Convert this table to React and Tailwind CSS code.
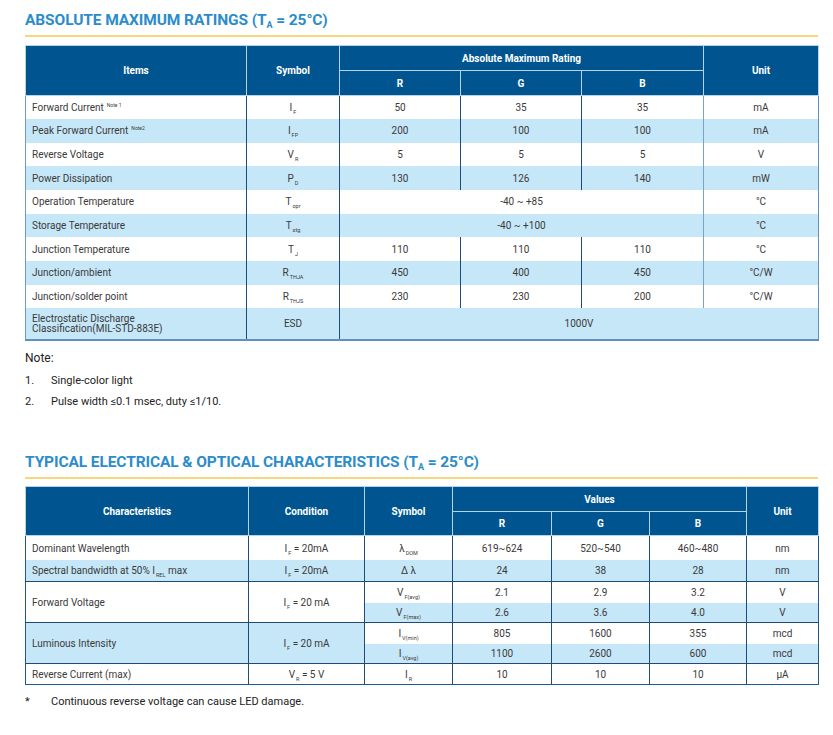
const headCell = "bg-[#005591] text-white font-bold text-[10px] text-center border border-[#b7d3e8]";
const td = "text-[10px] text-[#3a3a3a] text-center";
const dark = "border-l border-[#1e4b78]";
const light = "border-l border-[#7aa4c6]";

function Sym({ b, s }) {
  return (
    <span>
      {b}
      {s && <sub className="text-[5.5px] bottom-[-3px] ml-[1px]">{s}</sub>}
    </span>
  );
}

function Title({ children }) {
  return (
    <div className="pb-[5px] border-b-2 border-[#f6d77d]">
      <h2 className="text-[15.5px] font-bold text-[#2b8ccc] leading-[20px] tracking-[-0.1px]">{children}</h2>
    </div>
  );
}

const ratings = [
  { item: "Forward Current", note: "Note 1", sym: ["I", "F"], v: ["50", "35", "35"], unit: "mA" },
  { item: "Peak Forward Current", note: "Note2", sym: ["I", "FP"], v: ["200", "100", "100"], unit: "mA" },
  { item: "Reverse Voltage", sym: ["V", "R"], v: ["5", "5", "5"], unit: "V" },
  { item: "Power Dissipation", sym: ["P", "D"], v: ["130", "126", "140"], unit: "mW" },
  { item: "Operation Temperature", sym: ["T", "opr"], span: "-40 ~ +85", unit: "°C" },
  { item: "Storage Temperature", sym: ["T", "stg"], span: "-40 ~ +100", unit: "°C" },
  { item: "Junction Temperature", sym: ["T", "J"], v: ["110", "110", "110"], unit: "°C" },
  { item: "Junction/ambient", sym: ["R", "THJA"], v: ["450", "400", "450"], unit: "°C/W" },
  { item: "Junction/solder point", sym: ["R", "THJS"], v: ["230", "230", "200"], unit: "°C/W" },
];

function RatingsTable() {
  return (
    <table className="w-[793px] border-collapse table-fixed border-b-2 border-b-[#5d91bf]">
      <colgroup>
        <col className="w-[221px]" />
        <col className="w-[93px]" />
        <col className="w-[121px]" />
        <col className="w-[121px]" />
        <col className="w-[122px]" />
        <col className="w-[115px]" />
      </colgroup>
      <thead>
        <tr className="h-[25px]">
          <th rowSpan={2} className={headCell}>Items</th>
          <th rowSpan={2} className={headCell}>Symbol</th>
          <th colSpan={3} className={headCell}>Absolute Maximum Rating</th>
          <th rowSpan={2} className={headCell}>Unit</th>
        </tr>
        <tr className="h-[25px]">
          <th className={headCell}>R</th>
          <th className={headCell}>G</th>
          <th className={headCell}>B</th>
        </tr>
      </thead>
      <tbody>
        {ratings.map((r, i) => (
          <tr key={r.item} className={`h-[23.66px] ${i % 2 ? "bg-[#c6e7f8]" : "bg-white"}`}>
            <td className={`${td} text-left pl-[6px] border-l border-[#6f9cc2]`}>
              {r.item}
              {r.note && <sup className="text-[5px] ml-[3px] top-[-4px]">{r.note}</sup>}
            </td>
            <td className={`${td} ${dark}`}><Sym b={r.sym[0]} s={r.sym[1]} /></td>
            {r.span ? (
              <td colSpan={3} className={`${td} ${dark}`}>{r.span}</td>
            ) : (
              r.v.map((v, j) => (
                <td key={j} className={`${td} ${dark}`}>{v}</td>
              ))
            )}
            <td className={`${td} ${light} border-r border-r-[#5d91bf]`}>{r.unit}</td>
          </tr>
        ))}
        <tr className="h-[32px] bg-[#c6e7f8]">
          <td className={`${td} text-left pl-[6px] leading-[10px] border-l border-[#6f9cc2]`}>
            Electrostatic Discharge
            <br />
            Classification(MIL-STD-883E)
          </td>
          <td className={`${td} ${dark}`}>ESD</td>
          <td colSpan={4} className={`${td} ${dark} border-r border-r-[#5d91bf]`}>1000V</td>
        </tr>
      </tbody>
    </table>
  );
}

const b2 = "border-l border-[#1e4b78]";

function CharTable() {
  const blue = "bg-[#c6e7f8]";
  const top = "border-t border-t-[#1e4b78]";
  return (
    <table className="w-[793px] border-collapse table-fixed border border-[#1e5a8e]">
      <colgroup>
        <col className="w-[223px]" />
        <col className="w-[116px]" />
        <col className="w-[88px]" />
        <col className="w-[99px]" />
        <col className="w-[98px]" />
        <col className="w-[97px]" />
        <col className="w-[72px]" />
      </colgroup>
      <thead>
        <tr className="h-[25px]">
          <th rowSpan={2} className={headCell}>Characteristics</th>
          <th rowSpan={2} className={headCell}>Condition</th>
          <th rowSpan={2} className={headCell}>Symbol</th>
          <th colSpan={3} className={headCell}>Values</th>
          <th rowSpan={2} className={headCell}>Unit</th>
        </tr>
        <tr className="h-[24px]">
          <th className={headCell}>R</th>
          <th className={headCell}>G</th>
          <th className={headCell}>B</th>
        </tr>
      </thead>
      <tbody>
        <tr className="h-[24px] bg-white">
          <td className={`${td} text-left pl-[6px]`}>Dominant Wavelength</td>
          <td className={`${td} ${b2}`}><Sym b="I" s="F" /> = 20mA</td>
          <td className={`${td} ${b2}`}><Sym b="λ" s="DOM" /></td>
          <td className={`${td} ${b2}`}>619~624</td>
          <td className={`${td} ${b2}`}>520~540</td>
          <td className={`${td} ${b2}`}>460~480</td>
          <td className={`${td} ${b2}`}>nm</td>
        </tr>
        <tr className={`h-[22px] ${blue}`}>
          <td className={`${td} text-left pl-[6px]`}>
            Spectral bandwidth at 50% <Sym b="I" s="REL" /> max
          </td>
          <td className={`${td} ${b2}`}><Sym b="I" s="F" /> = 20mA</td>
          <td className={`${td} ${b2}`}>Δ λ</td>
          <td className={`${td} ${b2}`}>24</td>
          <td className={`${td} ${b2}`}>38</td>
          <td className={`${td} ${b2}`}>28</td>
          <td className={`${td} ${b2}`}>nm</td>
        </tr>
        <tr className={`h-[21px] bg-white ${top}`}>
          <td rowSpan={2} className={`${td} text-left pl-[6px]`}>Forward Voltage</td>
          <td rowSpan={2} className={`${td} ${b2}`}><Sym b="I" s="F" /> = 20 mA</td>
          <td className={`${td} ${b2}`}><Sym b="V" s="F(avg)" /></td>
          <td className={`${td} ${b2}`}>2.1</td>
          <td className={`${td} ${b2}`}>2.9</td>
          <td className={`${td} ${b2}`}>3.2</td>
          <td className={`${td} ${b2}`}>V</td>
        </tr>
        <tr className={`h-[20px] ${blue}`}>
          <td className={`${td} ${b2}`}><Sym b="V" s="F(max)" /></td>
          <td className={`${td} ${b2}`}>2.6</td>
          <td className={`${td} ${b2}`}>3.6</td>
          <td className={`${td} ${b2}`}>4.0</td>
          <td className={`${td} ${b2}`}>V</td>
        </tr>
        <tr className={`h-[21px] bg-white ${top}`}>
          <td rowSpan={2} className={`${td} text-left pl-[6px] ${blue}`}>Luminous Intensity</td>
          <td rowSpan={2} className={`${td} ${b2} ${blue}`}><Sym b="I" s="F" /> = 20 mA</td>
          <td className={`${td} ${b2}`}><Sym b="I" s="V(min)" /></td>
          <td className={`${td} ${b2}`}>805</td>
          <td className={`${td} ${b2}`}>1600</td>
          <td className={`${td} ${b2}`}>355</td>
          <td className={`${td} ${b2}`}>mcd</td>
        </tr>
        <tr className={`h-[20px] ${blue}`}>
          <td className={`${td} ${b2}`}><Sym b="I" s="V(avg)" /></td>
          <td className={`${td} ${b2}`}>1100</td>
          <td className={`${td} ${b2}`}>2600</td>
          <td className={`${td} ${b2}`}>600</td>
          <td className={`${td} ${b2}`}>mcd</td>
        </tr>
        <tr className={`h-[21px] bg-white ${top}`}>
          <td className={`${td} text-left pl-[6px]`}>Reverse Current (max)</td>
          <td className={`${td} ${b2}`}><Sym b="V" s="R" /> = 5 V</td>
          <td className={`${td} ${b2}`}><Sym b="I" s="R" /></td>
          <td className={`${td} ${b2}`}>10</td>
          <td className={`${td} ${b2}`}>10</td>
          <td className={`${td} ${b2}`}>10</td>
          <td className={`${td} ${b2}`}>μA</td>
        </tr>
      </tbody>
    </table>
  );
}

export default function App() {
  return (
    <div className="w-[833px] h-[735px] bg-white font-['Roboto',sans-serif] pl-[25px] pr-[15px] pt-[10px]">
      <div className="w-[793px]">
        <Title>
          ABSOLUTE MAXIMUM RATINGS (T<sub className="text-[9px] bottom-[-3px]">A</sub> = 25°C)
        </Title>
        <div className="mt-[8px]">
          <RatingsTable />
        </div>
        <div className="mt-[8px] text-[12px] text-[#222] leading-[18px]">
          <p>Note:</p>
          <div className="mt-[5px] flex flex-col gap-[3px] text-[11px]">
            <p className="flex"><span className="w-[26px]">1.</span>Single-color light</p>
            <p className="flex"><span className="w-[26px]">2.</span>Pulse width ≤0.1 msec, duty ≤1/10.</p>
          </div>
        </div>
        <div className="mt-[41px]">
          <Title>
            TYPICAL ELECTRICAL &amp; OPTICAL CHARACTERISTICS (T<sub className="text-[9px] bottom-[-3px]">A</sub> = 25°C)
          </Title>
        </div>
        <div className="mt-[7px]">
          <CharTable />
        </div>
        <p className="mt-[9px] flex text-[11px] text-[#222]">
          <span className="w-[26px]">*</span>Continuous reverse voltage can cause LED damage.
        </p>
      </div>
    </div>
  );
}
